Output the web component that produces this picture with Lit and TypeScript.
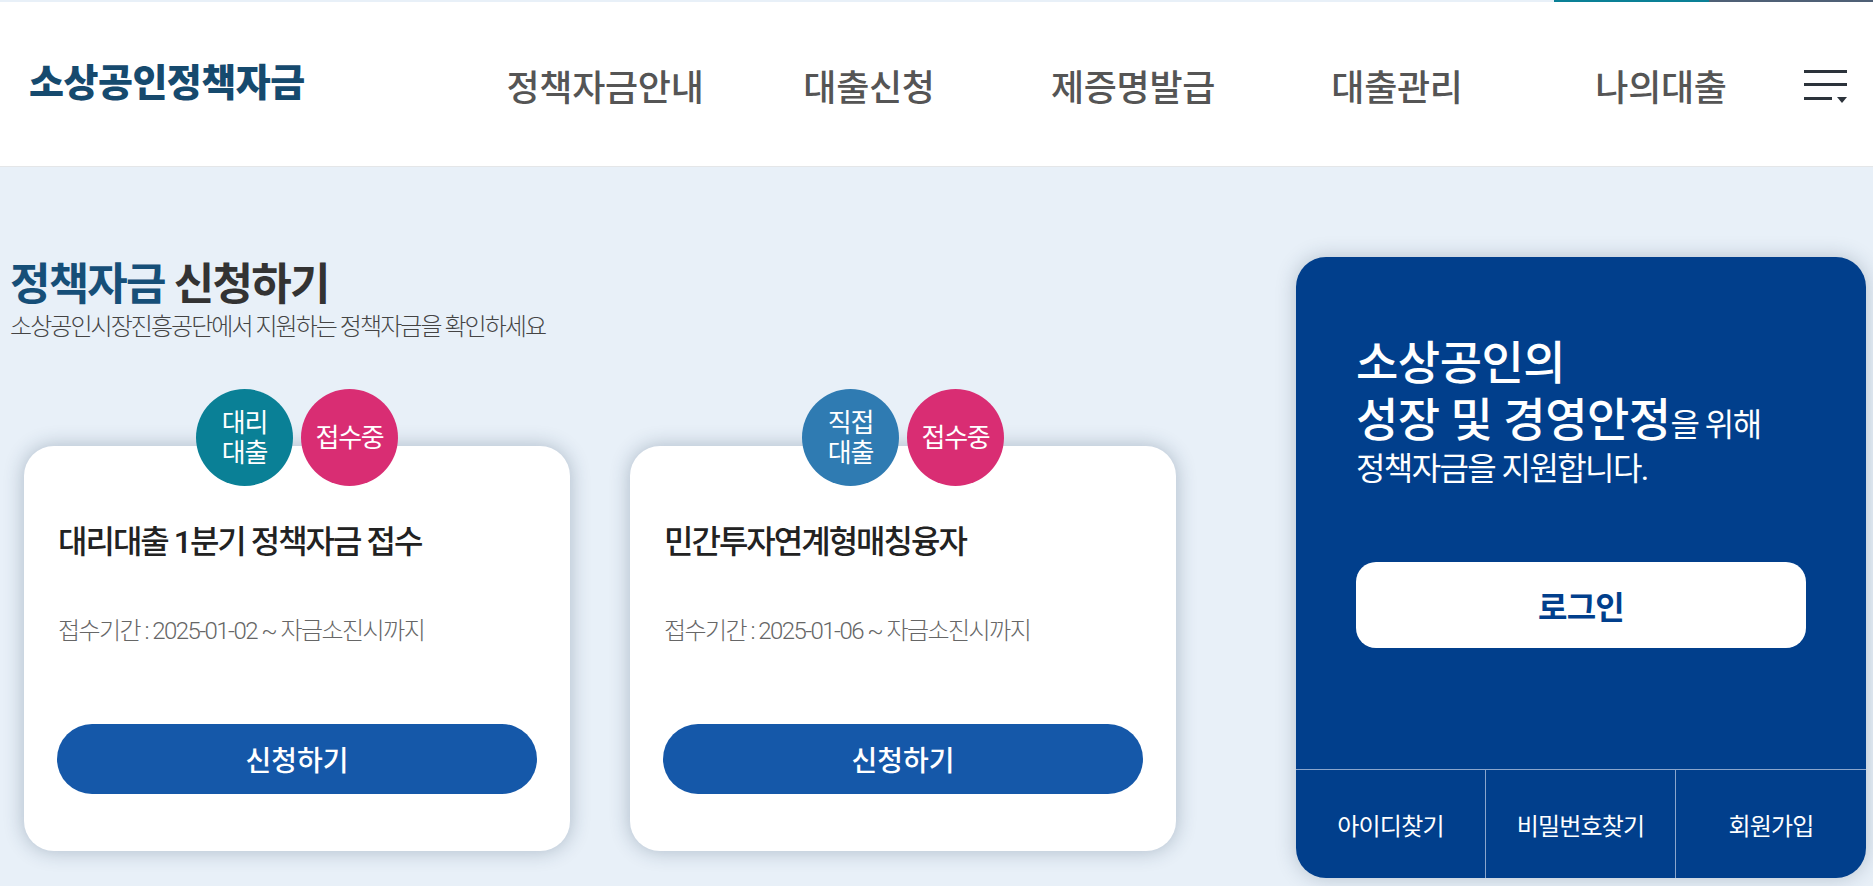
import { LitElement, css, html } from 'lit';
import { customElement } from 'lit/decorators.js';

const navItems = ['정책자금안내', '대출신청', '제증명발급', '대출관리', '나의대출'];

const cards = [
    { type: ['대리', '대출'], typeColor: 'teal', title: '대리대출 1분기 정책자금 접수', period: '접수기간 : 2025-01-02 ~ 자금소진시까지' },
    { type: ['직접', '대출'], typeColor: 'blue', title: '민간투자연계형매칭융자', period: '접수기간 : 2025-01-06 ~ 자금소진시까지' },
];

@customElement('app-root')
export class AppRoot extends LitElement {
    static override styles = css`
        :host {
            display: block;
            height: 886px;
            overflow: hidden;
            background: #e8f0f8;
            font-family: Roboto, "Noto Sans CJK KR", sans-serif;
        }

        .topline {
            display: flex;
            justify-content: flex-end;
            height: 2px;
        }

        .topline .teal { width: 155px; background: #0a8096; }
        .topline .slate { width: 164px; background: #4f6076; }

        header {
            display: flex;
            align-items: center;
            height: 164px;
            background: #fff;
            border-bottom: 1px solid #e4e6e8;
            padding-left: 29px;
        }

        .logo {
            width: 444px;
            flex: none;
            font-size: 38px;
            font-weight: 900;
            letter-spacing: -0.5px;
            color: #164a6e;
            margin-top: -9px;
            white-space: nowrap;
        }

        nav {
            display: flex;
            width: 1320px;
            flex: none;
            margin-top: 1px;
        }

        nav a {
            flex: 1;
            text-align: center;
            font-size: 36px;
            font-weight: 500;
            letter-spacing: -0.3px;
            color: #555;
            white-space: nowrap;
        }

        .menu-icon {
            flex: none;
            margin-left: 11px;
            margin-top: 5px;
            display: block;
        }

        main {
            display: flex;
            justify-content: space-between;
            padding: 90px 7px 0 0;
        }

        .left {
            padding-left: 10px;
        }

        h1 {
            margin: 0;
            margin-top: 2px;
            font-size: 44px;
            line-height: 52px;
            font-weight: 700;
            letter-spacing: -1.8px;
            color: #333;
        }

        h1 em {
            font-style: normal;
            color: #164f78;
        }

        .sub {
            margin: 1px 0 0;
            font-size: 24px;
            line-height: 30px;
            font-weight: 300;
            letter-spacing: -1.95px;
            color: #444;
        }

        .cards {
            display: flex;
            gap: 60px;
            margin-top: 104px;
            margin-left: 14px;
        }

        .card {
            position: relative;
            box-sizing: border-box;
            width: 546px;
            height: 405px;
            padding: 74px 33px 57px;
            display: flex;
            flex-direction: column;
            background: #fff;
            border-radius: 30px;
            box-shadow: 0 0 20px rgba(30, 55, 85, 0.3);
        }

        .badges {
            position: absolute;
            top: -57px;
            left: 0;
            right: 0;
            display: flex;
            justify-content: center;
            gap: 8px;
        }

        .badge {
            width: 97px;
            height: 97px;
            border-radius: 50%;
            display: flex;
            align-items: center;
            justify-content: center;
            text-align: center;
            color: #fff;
            font-size: 26px;
            line-height: 30px;
            letter-spacing: -1.2px;
        }

        .badge.teal { background: #0a8096; }
        .badge.blue { background: #2f7bb2; }
        .badge.pink { background: #d92d73; }

        .card h2 {
            margin: 0 0 0 1px;
            font-size: 32px;
            line-height: 44px;
            font-weight: 500;
            letter-spacing: -2px;
            color: #222;
        }

        .period {
            margin: 50px 0 0 1px;
            font-size: 24px;
            line-height: 34px;
            font-weight: 300;
            letter-spacing: -1.55px;
            color: #666;
            white-space: nowrap;
        }

        .apply {
            margin-top: auto;
            height: 70px;
            border-radius: 35px;
            background: #1558a9;
            color: #fff;
            font-size: 28px;
            font-weight: 500;
            display: flex;
            align-items: center;
            justify-content: center;
        }

        .panel {
            box-sizing: border-box;
            width: 570px;
            height: 621px;
            display: flex;
            flex-direction: column;
            background: #013f8c;
            border-radius: 30px;
            box-shadow: 0 0 20px rgba(30, 55, 85, 0.25);
            color: #fff;
            overflow: hidden;
        }

        .panel-body {
            flex: 1;
            padding: 78px 60px 0;
        }

        .greeting {
            margin: 0;
            font-size: 32px;
            line-height: 40px;
            letter-spacing: -1.6px;
        }

        .greeting strong {
            font-size: 46px;
            line-height: 57px;
            font-weight: 500;
            letter-spacing: -0.5px;
        }

        .login {
            margin-top: 73px;
            height: 86px;
            border-radius: 20px;
            background: #fff;
            color: #013f8c;
            font-size: 32px;
            font-weight: 700;
            letter-spacing: -0.8px;
            display: flex;
            align-items: center;
            justify-content: center;
        }

        .links {
            display: grid;
            grid-template-columns: 189px 190px 1fr;
            height: 108px;
            border-top: 1px solid #8aa5cc;
        }

        .links a {
            display: flex;
            align-items: center;
            justify-content: center;
            font-size: 24px;
            letter-spacing: -0.8px;
            border-left: 1px solid #8aa5cc;
        }

        .links a:first-child {
            border-left: 0;
        }
    `;

    override render() {
        return html`
            <div class="topline"><span class="teal"></span><span class="slate"></span></div>
            <header>
                <div class="logo">소상공인정책자금</div>
                <nav>${navItems.map((item) => html`<a>${item}</a>`)}</nav>
                <svg class="menu-icon" width="43" height="34" viewBox="0 0 43 34" fill="#2c333b">
                    <rect x="0" y="0" width="43" height="3"></rect>
                    <rect x="0" y="13" width="43" height="3"></rect>
                    <rect x="0" y="27" width="28" height="3"></rect>
                    <path d="M33 27h10l-5 6z"></path>
                </svg>
            </header>
            <main>
                <section class="left">
                    <h1><em>정책자금</em> 신청하기</h1>
                    <p class="sub">소상공인시장진흥공단에서 지원하는 정책자금을 확인하세요</p>
                    <div class="cards">
                        ${cards.map((card) => html`
                            <article class="card">
                                <div class="badges">
                                    <div class="badge ${card.typeColor}">${card.type[0]}<br />${card.type[1]}</div>
                                    <div class="badge pink">접수중</div>
                                </div>
                                <h2>${card.title}</h2>
                                <p class="period">${card.period}</p>
                                <a class="apply">신청하기</a>
                            </article>
                        `)}
                    </div>
                </section>
                <aside class="panel">
                    <div class="panel-body">
                        <p class="greeting">
                            <strong>소상공인의</strong><br />
                            <strong>성장 및 경영안정</strong>을 위해<br />
                            정책자금을 지원합니다.
                        </p>
                        <a class="login">로그인</a>
                    </div>
                    <div class="links">
                        <a>아이디찾기</a>
                        <a>비밀번호찾기</a>
                        <a>회원가입</a>
                    </div>
                </aside>
            </main>
        `;
    }
}
